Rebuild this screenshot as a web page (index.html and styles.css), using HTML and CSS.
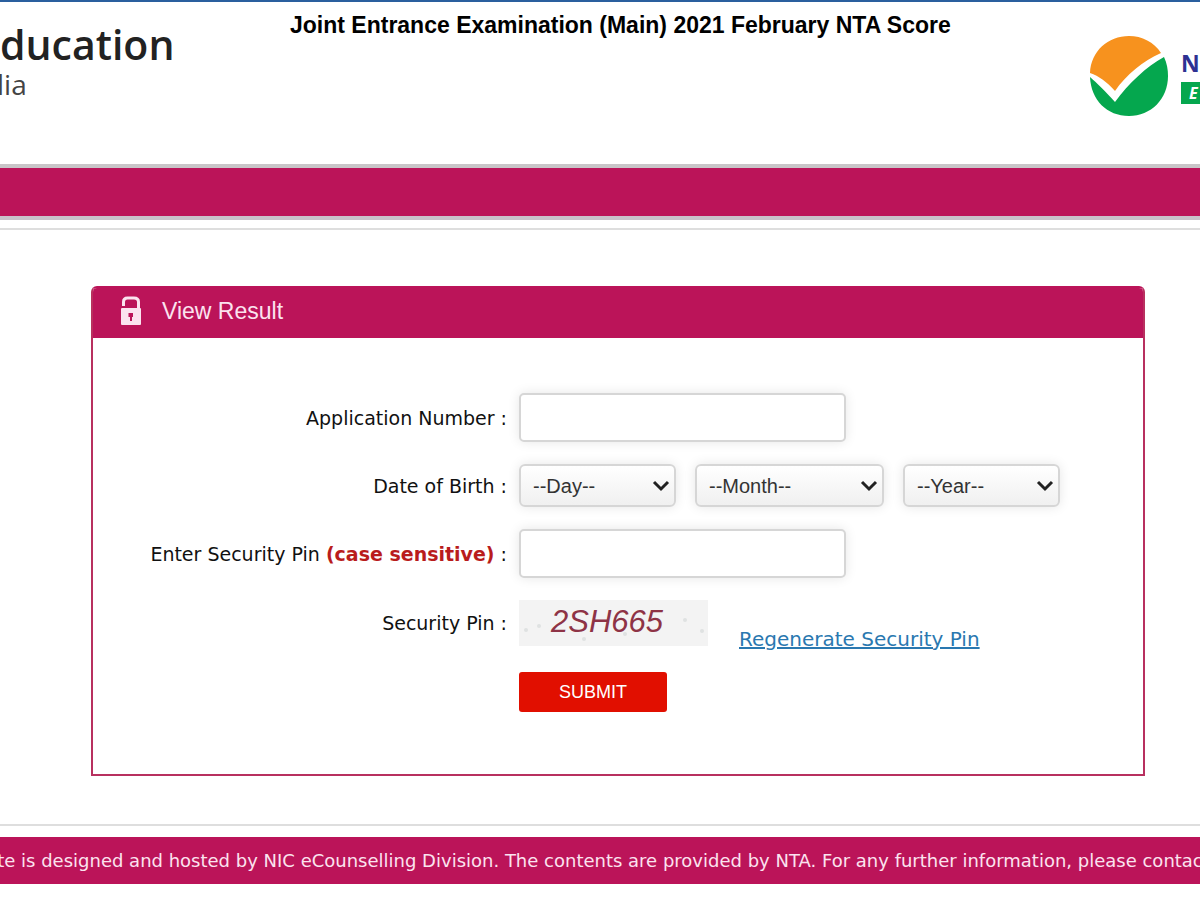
FILE: index.html
```
<!DOCTYPE html>
<html lang="en">
<head>
    <meta charset="UTF-8">
    <meta name="viewport" content="width=device-width, initial-scale=1.0">
    <title>View Result</title>
    <link rel="stylesheet" href="styles.css">
</head>
<body>
    <header class="header">
        <div class="brand">
            <div class="brand-name">ducation</div>
            <div class="brand-country">lia</div>
        </div>
        <h1 class="title">Joint Entrance Examination (Main) 2021 February NTA Score</h1>
        <div class="logo">
            <svg class="logo-mark" viewBox="0 0 80 82" aria-hidden="true">
                <path d="M1 38C2 16 19 1 40 1C53 1 65 7 72 18C54 26 37 40 26 56C18 47 10 41 1 38Z" fill="#f7921e"/>
                <path d="M1 42C8 48 17 57 26 67C40 48 57 32 75 22C78 28 79 35 79 41C79 64 62 81 40 81C18 81 2 65 1 42Z" fill="#05a74e"/>
            </svg>
            <div class="logo-text">
                <div class="logo-name">N</div>
                <div class="logo-tag">E</div>
            </div>
        </div>
    </header>

    <div class="nav-bar"></div>

    <main class="content">
        <section class="panel">
            <div class="panel-header">
                <svg class="lock" viewBox="0 0 22 30" aria-hidden="true">
                    <path d="M3.500 10V6Q3.500 2 7.500 2H14Q18.500 2 18.500 6V14" fill="none" stroke="#fbe3ef" stroke-width="3"/>
                    <rect x="1" y="12" width="20" height="17" rx="1" fill="#fbe3ef"/>
                    <path d="M8.500 17H13V21H12V25H10V21H8.500Z" fill="#bb1459"/>
                </svg>
                <h2>View Result</h2>
            </div>
            <form class="form">
                <label for="appNumber">Application Number :</label>
                <input class="text-input" type="text" id="appNumber">

                <label for="day">Date of Birth :</label>
                <div class="dob">
                    <select id="day"><option>--Day--</option></select>
                    <select class="month" aria-label="Month"><option>--Month--</option></select>
                    <select aria-label="Year"><option>--Year--</option></select>
                </div>

                <label for="pin">Enter Security Pin <b>(case sensitive)</b> :</label>
                <input class="text-input" type="text" id="pin">

                <span class="label">Security Pin :</span>
                <div class="captcha-row">
                    <div class="captcha">
                        <svg class="captcha-noise" viewBox="0 0 189 46" aria-hidden="true">
                            <g fill="#dfe2e2">
                                <circle cx="7" cy="30" r="2"/>
                                <circle cx="20" cy="26" r="2"/>
                                <circle cx="65" cy="39" r="2"/>
                                <circle cx="106" cy="34" r="2"/>
                                <circle cx="166" cy="20" r="2"/>
                                <circle cx="183" cy="31" r="2"/>
                            </g>
                        </svg>
                        2SH665
                    </div>
                    <a href="#">Regenerate Security Pin</a>
                </div>

                <button class="submit" type="submit">SUBMIT</button>
            </form>
        </section>
    </main>

    <footer class="footer">
        <p>te is designed and hosted by NIC eCounselling Division. The contents are provided by NTA. For any further information, please contac</p>
    </footer>
</body>
</html>
```
FILE: styles.css
```
* {
    margin: 0;
    padding: 0;
    box-sizing: border-box;
}

body {
    font-family: Verdana, "DejaVu Sans", sans-serif;
    font-size: 19px;
    color: #111;
    background: #fff;
    overflow-x: hidden;
}

.header {
    display: grid;
    grid-template-columns: 290px 1fr auto;
    align-items: start;
    height: 164px;
    border-top: 2px solid #2a5f9e;
    overflow: hidden;
}

.brand {
    padding-top: 14px;
    font-family: "Open Sans", sans-serif;
}

.brand-name {
    font-size: 41px;
    font-weight: 600;
    line-height: 56px;
    color: #222;
}

.brand-country {
    margin-left: -3px;
    font-size: 28px;
    line-height: 24px;
    color: #444;
}

.title {
    padding-top: 9px;
    font-family: "Liberation Sans", Arial, sans-serif;
    font-size: 23px;
    line-height: 28px;
    color: #000;
    white-space: nowrap;
}

.logo {
    display: flex;
    gap: 12px;
    padding-top: 33px;
}

.logo-mark {
    width: 80px;
    height: 82px;
}

.logo-text {
    width: 19px;
    padding-top: 14px;
    font-family: "Open Sans", sans-serif;
    font-weight: 700;
    white-space: nowrap;
}

.logo-name {
    font-size: 23px;
    line-height: 28px;
    color: #2e3192;
}

.logo-tag {
    margin-top: 5px;
    padding-left: 8px;
    font-size: 16px;
    font-style: italic;
    line-height: 22px;
    color: #fff;
    background: #05a74e;
}

.nav-bar {
    height: 56px;
    background: #bb1459;
    border-top: 4px solid #c9c5c8;
    border-bottom: 4px solid #c9c2ca;
}

.content {
    margin-top: 8px;
    padding: 56px 55px 48px 91px;
    border-top: 2px solid #dedede;
    border-bottom: 2px solid #dedede;
}

.panel {
    border: 2px solid #b8305f;
    border-top-color: #bb1459;
    border-radius: 6px 6px 0 0;
}

.panel-header {
    display: flex;
    align-items: center;
    gap: 20px;
    height: 50px;
    padding: 0 27px 4px;
    background: #bb1459;
    border-radius: 4px 4px 0 0;
    color: #fbe3ef;
}

.panel-header h2 {
    font-family: "Liberation Sans", Arial, sans-serif;
    font-size: 23px;
    font-weight: 400;
}

.lock {
    width: 22px;
    height: 30px;
}

.form {
    display: grid;
    grid-template-columns: 414px 1fr;
    gap: 22px 12px;
    align-items: center;
    padding: 55px 0 62px;
}

.form label,
.label {
    text-align: right;
    white-space: nowrap;
}

.form b {
    color: #b91c1c;
}

.text-input {
    width: 327px;
    height: 49px;
    padding: 0 12px;
    font-size: 20px;
    background: #fff;
    border: 2px solid #d6d6d6;
    border-radius: 5px;
    box-shadow: 0 0 12px rgba(0,0,0,0.1);
}

.dob {
    display: flex;
    gap: 19px;
}

.dob select {
    appearance: none;
    width: 157px;
    height: 43px;
    padding: 0 12px;
    font-family: "Liberation Sans", Arial, sans-serif;
    font-size: 20px;
    color: #333;
    background: url("data:image/svg+xml,%3Csvg xmlns='http://www.w3.org/2000/svg' width='18' height='12'%3E%3Cpath d='M2 2l7 7 7-7' fill='none' stroke='%23222' stroke-width='3'/%3E%3C/svg%3E") no-repeat right 4px center, linear-gradient(#fff, #f0f0f0);
    border: 2px solid #d6d6d6;
    border-radius: 6px;
    box-shadow: 0 0 12px rgba(0,0,0,0.1);
}

.dob .month {
    width: 189px;
}

.captcha-row {
    display: flex;
    align-items: flex-end;
    gap: 31px;
}

.captcha {
    position: relative;
    width: 189px;
    height: 46px;
    padding-left: 32px;
    font-family: "Liberation Sans Narrow", "Liberation Sans", Arial, sans-serif;
    font-size: 31px;
    font-style: italic;
    line-height: 44px;
    color: #8e3346;
    background: #f3f3f3;
}

.captcha-noise {
    position: absolute;
    inset: 0;
}

.captcha-row a {
    font-size: 20px;
    line-height: 14px;
    color: #2a78b0;
}

.submit {
    grid-column: 2;
    width: 148px;
    height: 40px;
    margin-top: 4px;
    font-family: "Liberation Sans", Arial, sans-serif;
    font-size: 18px;
    color: #fff;
    background: #e10f00;
    border: none;
    border-radius: 3px;
    cursor: pointer;
}

.footer {
    display: flex;
    justify-content: center;
    margin: 11px 0 16px;
    padding: 12px 0;
    font-size: 18px;
    line-height: 23px;
    color: #fbe3ef;
    background: #bb1459;
    white-space: nowrap;
    overflow: hidden;
}
```
